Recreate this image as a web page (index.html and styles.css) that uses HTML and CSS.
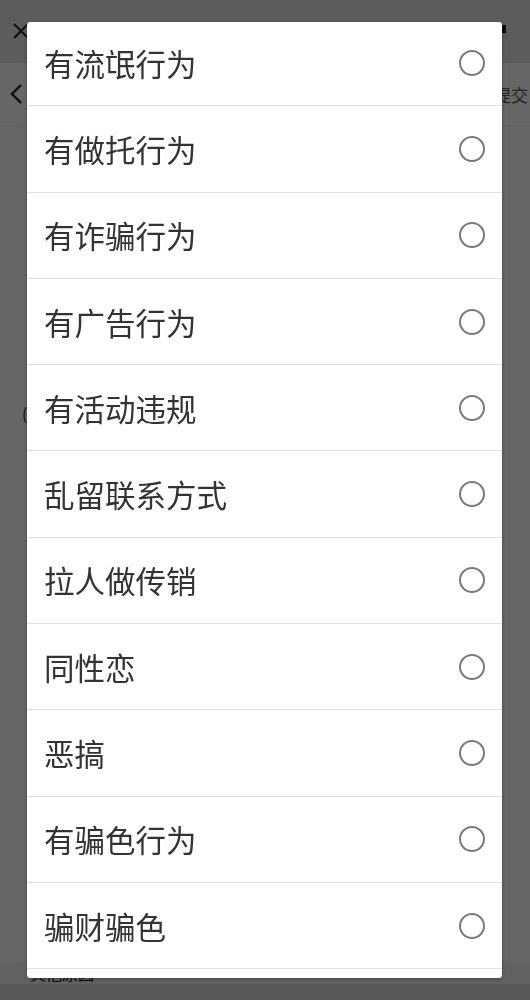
FILE: index.html
```html
<!DOCTYPE html>
<html lang="zh-CN">
<head>
    <meta charset="UTF-8">
    <meta name="viewport" content="width=device-width, initial-scale=1.0">
    <title>举报</title>
    <link rel="stylesheet" href="styles.css">
</head>
<body>
    <!-- Página de fondo -->
    <div class="page">
        <div class="top-bar">
            <span class="close-icon">
                <svg width="18" height="18" viewBox="0 0 18 18"><path d="M2 2 L16 16 M16 2 L2 16" stroke="#222" stroke-width="2" fill="none"/></svg>
            </span>
            <span class="more-dot"></span>
        </div>
        <div class="nav-bar">
            <span class="back-icon">
                <svg width="14" height="22" viewBox="0 0 14 22"><path d="M12 2 L3 11 L12 20" stroke="#222" stroke-width="2.4" fill="none"/></svg>
            </span>
            <span class="submit">提交</span>
        </div>
        <div class="content">
            <p class="content-text">(</p>
        </div>
        <div class="footer-text">其他原因</div>
        <div class="bottom-bar"></div>
    </div>

    <!-- Diálogo de selección -->
    <div class="mask">
        <div class="dialog">
            <ul class="option-list">
                <li class="option"><span class="option-label">有流氓行为</span><span class="radio"></span></li>
                <li class="option"><span class="option-label">有做托行为</span><span class="radio"></span></li>
                <li class="option"><span class="option-label">有诈骗行为</span><span class="radio"></span></li>
                <li class="option"><span class="option-label">有广告行为</span><span class="radio"></span></li>
                <li class="option"><span class="option-label">有活动违规</span><span class="radio"></span></li>
                <li class="option"><span class="option-label">乱留联系方式</span><span class="radio"></span></li>
                <li class="option"><span class="option-label">拉人做传销</span><span class="radio"></span></li>
                <li class="option"><span class="option-label">同性恋</span><span class="radio"></span></li>
                <li class="option"><span class="option-label">恶搞</span><span class="radio"></span></li>
                <li class="option"><span class="option-label">有骗色行为</span><span class="radio"></span></li>
                <li class="option"><span class="option-label">骗财骗色</span><span class="radio"></span></li>
                <li class="option"><span class="option-label">其他</span><span class="radio"></span></li>
            </ul>
        </div>
    </div>
</body>
</html>
```

FILE: styles.css
```css
body {
    margin: 0;
    padding: 0;
    font-family: "Noto Sans CJK SC", "Noto Sans", sans-serif;
    background-color: #ffffff;
    color: #333;
}
.page {
    height: 1000px;
    display: flex;
    flex-direction: column;
    overflow: hidden;
}
.top-bar {
    height: 63px;
    background-color: #e6e6e6;
    display: flex;
    align-items: center;
    justify-content: space-between;
    padding: 0 24px 0 12px;
}
.close-icon {
    display: flex;
    margin-top: -2px;
}
.more-dot {
    width: 4px;
    height: 8px;
    background-color: #222;
    margin-top: -6px;
}
.nav-bar {
    height: 62px;
    display: flex;
    align-items: center;
    justify-content: space-between;
    padding: 0 2px 0 9px;
    border-bottom: 1px solid #eee;
}
.back-icon {
    display: flex;
}
.submit {
    font-size: 17px;
    color: #555;
}
.content {
    flex: 1;
    padding: 275px 0 0 22px;
}
.content-text {
    margin: 0;
    font-size: 16px;
    color: #222;
}
.footer-text {
    height: 22px;
    line-height: 22px;
    padding: 0 0 0 30px;
    font-size: 16px;
    color: #111;
    background-color: #f4f4f4;
}
.bottom-bar {
    height: 16px;
    background-color: #dcdcdc;
}
.mask {
    position: fixed;
    top: 0;
    left: 0;
    right: 0;
    bottom: 0;
    background-color: rgba(0, 0, 0, 0.6); /* capa oscura */
    padding: 22px 28px 22px 27px;
}
.dialog {
    height: 956px;
    background-color: #ffffff;
    border-radius: 3px;
    overflow: hidden;
    box-shadow: 0 1px 4px rgba(0, 0, 0, 0.3);
}
.option-list {
    list-style: none;
    margin: -2px 0 0 0;
    padding: 0;
}
.option {
    height: 85.3px;
    border-bottom: 1px solid #e2e2e2;
    display: flex;
    align-items: center;
    justify-content: space-between;
    padding: 0 17px 0 17px;
}
.option-label {
    font-size: 30.5px;
    color: #333;
}
.radio {
    width: 22px;
    height: 22px;
    border: 2px solid #7a7a7a;
    border-radius: 50%;
}
```
